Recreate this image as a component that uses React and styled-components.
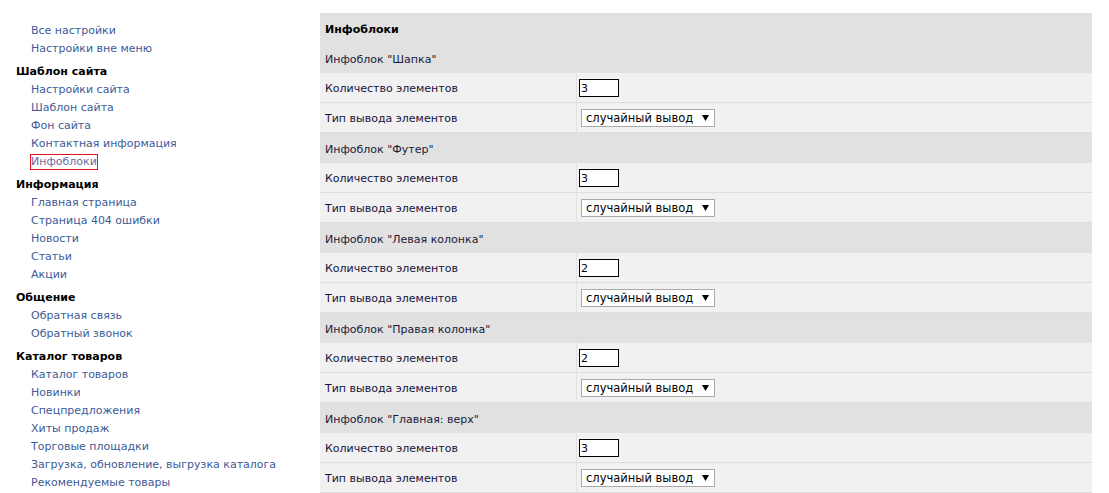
import React from "react";
import styled, { createGlobalStyle } from "styled-components";

const Global = createGlobalStyle`
  html, body { margin: 0; padding: 0; background: #fff; }
  body { font-family: "DejaVu Sans", Verdana, sans-serif; font-size: 11px; color: #000; }
`;

const Page = styled.div`
  display: flex;
  align-items: flex-start;
  width: 1109px;
`;

const Sidebar = styled.nav`
  width: 304px;
  padding: 22px 0 0 16px;
  display: flex;
  flex-direction: column;
`;

const Group = styled.div`
  display: flex;
  flex-direction: column;
  margin-top: ${(p) => (p.$first ? "0" : "5px")};
`;

const GroupTitle = styled.div`
  font-weight: bold;
  line-height: 18px;
  color: #000;
`;

const NavLink = styled.a`
  display: block;
  align-self: flex-start;
  margin-left: 15px;
  line-height: 18px;
  color: ${(p) => (p.$active ? "#6b6ba6" : "#3c5b98")};
  text-decoration: none;
  ${(p) =>
    p.$active &&
    `outline: 1px solid #e0141e; outline-offset: -2px; padding: 0 2px; margin-left: 13px;`}
`;

const Main = styled.section`
  margin-top: 13px;
  width: 772px;
  display: grid;
  grid-template-columns: 257px 1fr;
`;

const SectionRow = styled.div`
  grid-column: 1 / -1;
  box-sizing: border-box;
  height: 30px;
  display: flex;
  align-items: center;
  padding: 2px 0 0 5px;
  background: #e1e1e1;
  font-weight: ${(p) => (p.$bold ? "bold" : "normal")};
  color: ${(p) => (p.$bold ? "#000" : "#1a1a3a")};
`;

const LabelCell = styled.div`
  box-sizing: border-box;
  height: 30px;
  display: flex;
  align-items: center;
  padding: 2px 0 0 5px;
  background: #f1f1f1;
  border-bottom: 1px solid #dedede;
  border-right: 1px solid #e2e2e2;
  color: #14143c;
`;

const ValueCell = styled.div`
  box-sizing: border-box;
  height: 30px;
  display: flex;
  align-items: center;
  padding: 1px 0 0 ${(p) => p.$pad || "2px"};
  background: #f1f1f1;
  border-bottom: 1px solid #dedede;
`;

const NumInput = styled.input`
  box-sizing: border-box;
  width: 40px;
  height: 18px;
  border: 1px solid #000;
  padding: 0 1px;
  font-family: "DejaVu Sans", Verdana, sans-serif;
  font-size: 11px;
  color: #000;
  background: #fff;
  outline: none;
`;

const SelectWrap = styled.div`
  position: relative;
  width: 134px;
  height: 18px;
`;

const Select = styled.select`
  appearance: none;
  box-sizing: border-box;
  width: 100%;
  height: 100%;
  border: 1px solid #a9a9a9;
  border-radius: 0;
  background: #fff;
  padding: 0 0 0 4px;
  font-family: "DejaVu Sans", Verdana, sans-serif;
  font-size: 11.5px;
  color: #000;
  outline: none;
`;

const Arrow = styled.svg`
  position: absolute;
  right: 6px;
  top: 6px;
  pointer-events: none;
`;

const nav = [
  { links: ["Все настройки", "Настройки вне меню"] },
  {
    title: "Шаблон сайта",
    links: ["Настройки сайта", "Шаблон сайта", "Фон сайта", "Контактная информация", "Инфоблоки"],
    active: "Инфоблоки",
  },
  {
    title: "Информация",
    links: ["Главная страница", "Страница 404 ошибки", "Новости", "Статьи", "Акции"],
  },
  { title: "Общение", links: ["Обратная связь", "Обратный звонок"] },
  {
    title: "Каталог товаров",
    links: [
      "Каталог товаров",
      "Новинки",
      "Спецпредложения",
      "Хиты продаж",
      "Торговые площадки",
      "Загрузка, обновление, выгрузка каталога",
      "Рекомендуемые товары",
    ],
  },
];

const blocks = [
  { name: "Шапка", count: "3" },
  { name: "Футер", count: "3" },
  { name: "Левая колонка", count: "2" },
  { name: "Правая колонка", count: "2" },
  { name: "Главная: верх", count: "3" },
];

export default function App() {
  return (
    <>
      <Global />
      <Page>
        <Sidebar>
          {nav.map((g, i) => (
            <Group key={i} $first={i === 0}>
              {g.title && <GroupTitle>{g.title}</GroupTitle>}
              {g.links.map((l) => (
                <NavLink key={l} href="#" $active={g.active === l}>
                  {l}
                </NavLink>
              ))}
            </Group>
          ))}
        </Sidebar>
        <Main>
          <SectionRow $bold>Инфоблоки</SectionRow>
          {blocks.map((b) => (
            <React.Fragment key={b.name}>
              <SectionRow>Инфоблок "{b.name}"</SectionRow>
              <LabelCell>Количество элементов</LabelCell>
              <ValueCell>
                <NumInput defaultValue={b.count} />
              </ValueCell>
              <LabelCell>Тип вывода элементов</LabelCell>
              <ValueCell $pad="4px">
                <SelectWrap>
                  <Select defaultValue="random">
                    <option value="random">случайный вывод</option>
                    <option value="order">по порядку</option>
                  </Select>
                  <Arrow width="7" height="6" viewBox="0 0 7 6">
                    <path d="M0 0H7L3.5 6Z" fill="#000" />
                  </Arrow>
                </SelectWrap>
              </ValueCell>
            </React.Fragment>
          ))}
        </Main>
      </Page>
    </>
  );
}
